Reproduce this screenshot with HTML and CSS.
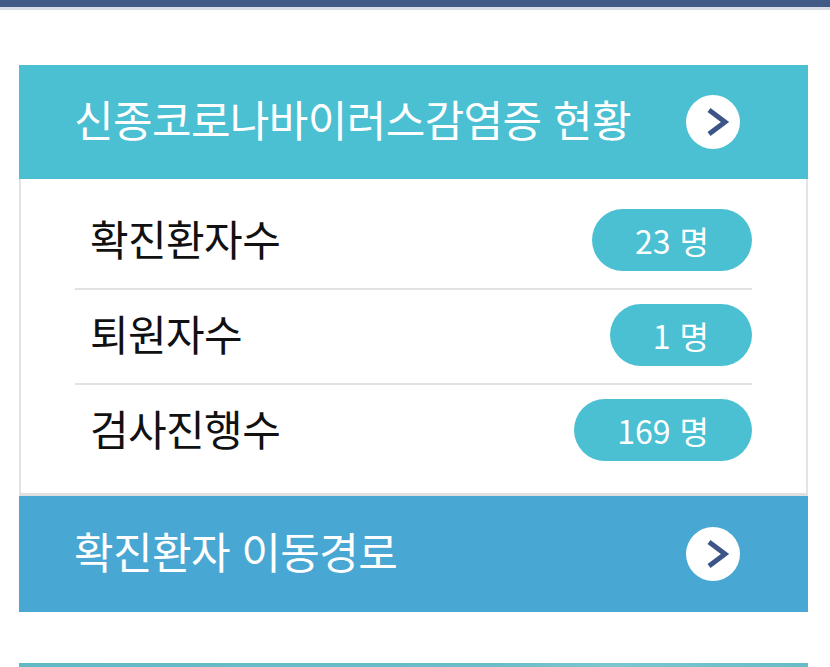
FILE: index.html
```html
<!DOCTYPE html>
<html lang="ko">
<head>
    <meta charset="UTF-8">
    <meta name="viewport" content="width=device-width, initial-scale=1.0">
    <title>신종코로나바이러스감염증 현황</title>
    <link rel="stylesheet" href="styles.css">
</head>
<body>
    <div class="topbar"></div>

    <div class="main">
        <!-- 현황 -->
        <div class="panel-head">
            <span class="panel-title">신종코로나바이러스감염증 현황</span>
            <span class="go-btn">
                <svg width="54" height="54" viewBox="0 0 54 54"><polyline points="23,15 39,27 23,39" fill="none" stroke="#3d5586" stroke-width="5"/></svg>
            </span>
        </div>
        <div class="stats">
            <div class="stat-row">
                <span class="stat-label">확진환자수</span>
                <span class="pill">23 명</span>
            </div>
            <div class="stat-row">
                <span class="stat-label">퇴원자수</span>
                <span class="pill">1 명</span>
            </div>
            <div class="stat-row">
                <span class="stat-label">검사진행수</span>
                <span class="pill">169 명</span>
            </div>
        </div>

        <!-- 이동경로 -->
        <div class="panel-head route">
            <span class="panel-title">확진환자 이동경로</span>
            <span class="go-btn">
                <svg width="54" height="54" viewBox="0 0 54 54"><polyline points="23,15 39,27 23,39" fill="none" stroke="#3d5586" stroke-width="5"/></svg>
            </span>
        </div>

        <div class="next-bar"></div>
    </div>
</body>
</html>
```

FILE: styles.css
```css
/* 기본 */
body {
    margin: 0;
    font-family: "Noto Sans CJK KR", "Noto Sans", sans-serif;
    background: #fff;
    color: #111;
}

.topbar {
    height: 7px;
    background: #415a86;
    border-bottom: 3px solid #d9dee4;
}

.main {
    padding: 55px 22px 0 19px;
}

/* 제목 영역 */
.panel-head {
    height: 114px;
    background: #4ac0d2;
    display: flex;
    align-items: center;
    justify-content: space-between;
    padding: 0 68px 0 55px;
}

.panel-head.route {
    height: 116px;
    background: #48a8d3;
}

.panel-title {
    color: #fff;
    font-size: 43px;
    line-height: 1;
    letter-spacing: -0.6px;
    margin-top: -8px;
}

.go-btn {
    width: 54px;
    height: 54px;
    border-radius: 50%;
    background: #fff;
    display: flex;
}

/* 통계 */
.stats {
    border-left: 2px solid #e3e3e3;
    border-right: 2px solid #e3e3e3;
    border-bottom: 3px solid #e0e0e0;
    padding: 16px 54px 15px 54px;
}

.stat-row {
    display: flex;
    align-items: center;
    justify-content: space-between;
    padding: 14px 0 17px 15px;
    border-bottom: 2px solid #e2e2e2;
}

.stat-row:last-child {
    border-bottom: none;
}

.stat-label {
    font-size: 42px;
    line-height: 1;
    letter-spacing: -0.6px;
    margin-top: -4px;
}

.pill {
    height: 62px;
    line-height: 62px;
    padding: 0 43px;
    border-radius: 31px;
    background: #4ac0d2;
    color: #fff;
    font-size: 32px;
}

.next-bar {
    margin-top: 51px;
    height: 20px;
    background: linear-gradient(90deg, #62b9c6, #6abdc8 60%, #7cc6d0 75%, #66bcc7);
}
```
